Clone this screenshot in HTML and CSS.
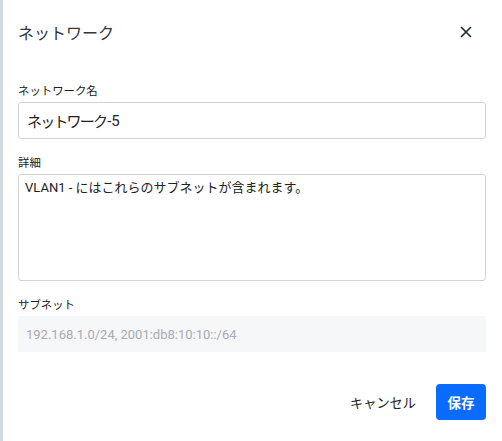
FILE: index.html
```html
<!DOCTYPE html>
<html lang="ja">
<head>
<meta charset="utf-8">
<link rel="stylesheet" href="styles.css">
</head>
<body>
<div class="dialog">
  <div class="header">
    <div class="title">ネットワーク</div>
    <button class="close" aria-label="close">
      <svg width="12" height="12" viewBox="0 0 12 12"><path d="M1.5 1.5 L10.5 10.5 M10.5 1.5 L1.5 10.5" stroke="#1f2433" stroke-width="1.6" stroke-linecap="round"/></svg>
    </button>
  </div>
  <div class="body">
    <div class="field">
      <label class="label">ネットワーク名</label>
      <div class="input"><span class="kana">ネットワーク</span>-5</div>
    </div>
    <div class="field">
      <label class="label">詳細</label>
      <div class="textarea">VLAN1 - にはこれらのサブネットが含まれます。</div>
    </div>
    <div class="field">
      <label class="label">サブネット</label>
      <div class="readonly">192.168.1.0/24, 2001:db8:10:10::/64</div>
    </div>
  </div>
  <div class="footer">
    <button class="btn-cancel">キャンセル</button>
    <button class="btn-save">保存</button>
  </div>
</div>
</body>
</html>
```
FILE: styles.css
```css
html, body {
  margin: 0;
  padding: 0;
  background: #ffffff;
}
body {
  font-family: Roboto, "Noto Sans CJK JP", sans-serif;
  color: #222;
  border-left: 3px solid #d5d8de;
  height: 441px;
  box-sizing: border-box;
}
.dialog {
  padding: 0 16px 0 15px;
}
.header {
  display: flex;
  align-items: center;
  justify-content: space-between;
  height: 64px;
}
.title {
  font-size: 16px;
  color: #33373d;
  font-weight: 400;
}
.close {
  border: none;
  background: none;
  padding: 0;
  margin-right: 14px;
  display: flex;
  align-items: center;
  justify-content: center;
  width: 12px;
  height: 12px;
}
.body {
  display: flex;
  flex-direction: column;
  gap: 16px;
  padding-top: 19px;
}
.field {
  display: flex;
  flex-direction: column;
}
.label {
  font-size: 11.4px;
  color: #222;
  line-height: 16px;
  margin-bottom: 3px;
}
.input {
  height: 37px;
  box-sizing: border-box;
  border: 1px solid #d0d4da;
  border-radius: 3px;
  padding: 0 8px;
  font-size: 15px;
  display: flex;
  align-items: center;
  color: #222;
}
.kana {
  letter-spacing: -1.8px;
  margin-right: 1px;
}
.textarea {
  height: 107px;
  box-sizing: border-box;
  border: 1px solid #d0d4da;
  border-radius: 3px;
  padding: 3px 6px;
  font-size: 13px;
  line-height: 20px;
  color: #222;
}
.readonly {
  height: 36px;
  box-sizing: border-box;
  background: #f6f7f9;
  border-radius: 2px;
  padding: 0 8px;
  font-size: 13px;
  color: #a7abb2;
  display: flex;
  align-items: center;
}
.footer {
  display: flex;
  justify-content: flex-end;
  align-items: center;
  gap: 20px;
  padding-top: 32px;
}
.btn-cancel {
  border: none;
  background: none;
  font-family: inherit;
  font-size: 13.2px;
  color: #222;
  padding: 0;
}
.btn-save {
  border: none;
  background: #0a6cff;
  color: #fff;
  font-family: inherit;
  font-size: 13.5px;
  font-weight: 700;
  width: 50px;
  height: 36px;
  border-radius: 4px;
}
```
